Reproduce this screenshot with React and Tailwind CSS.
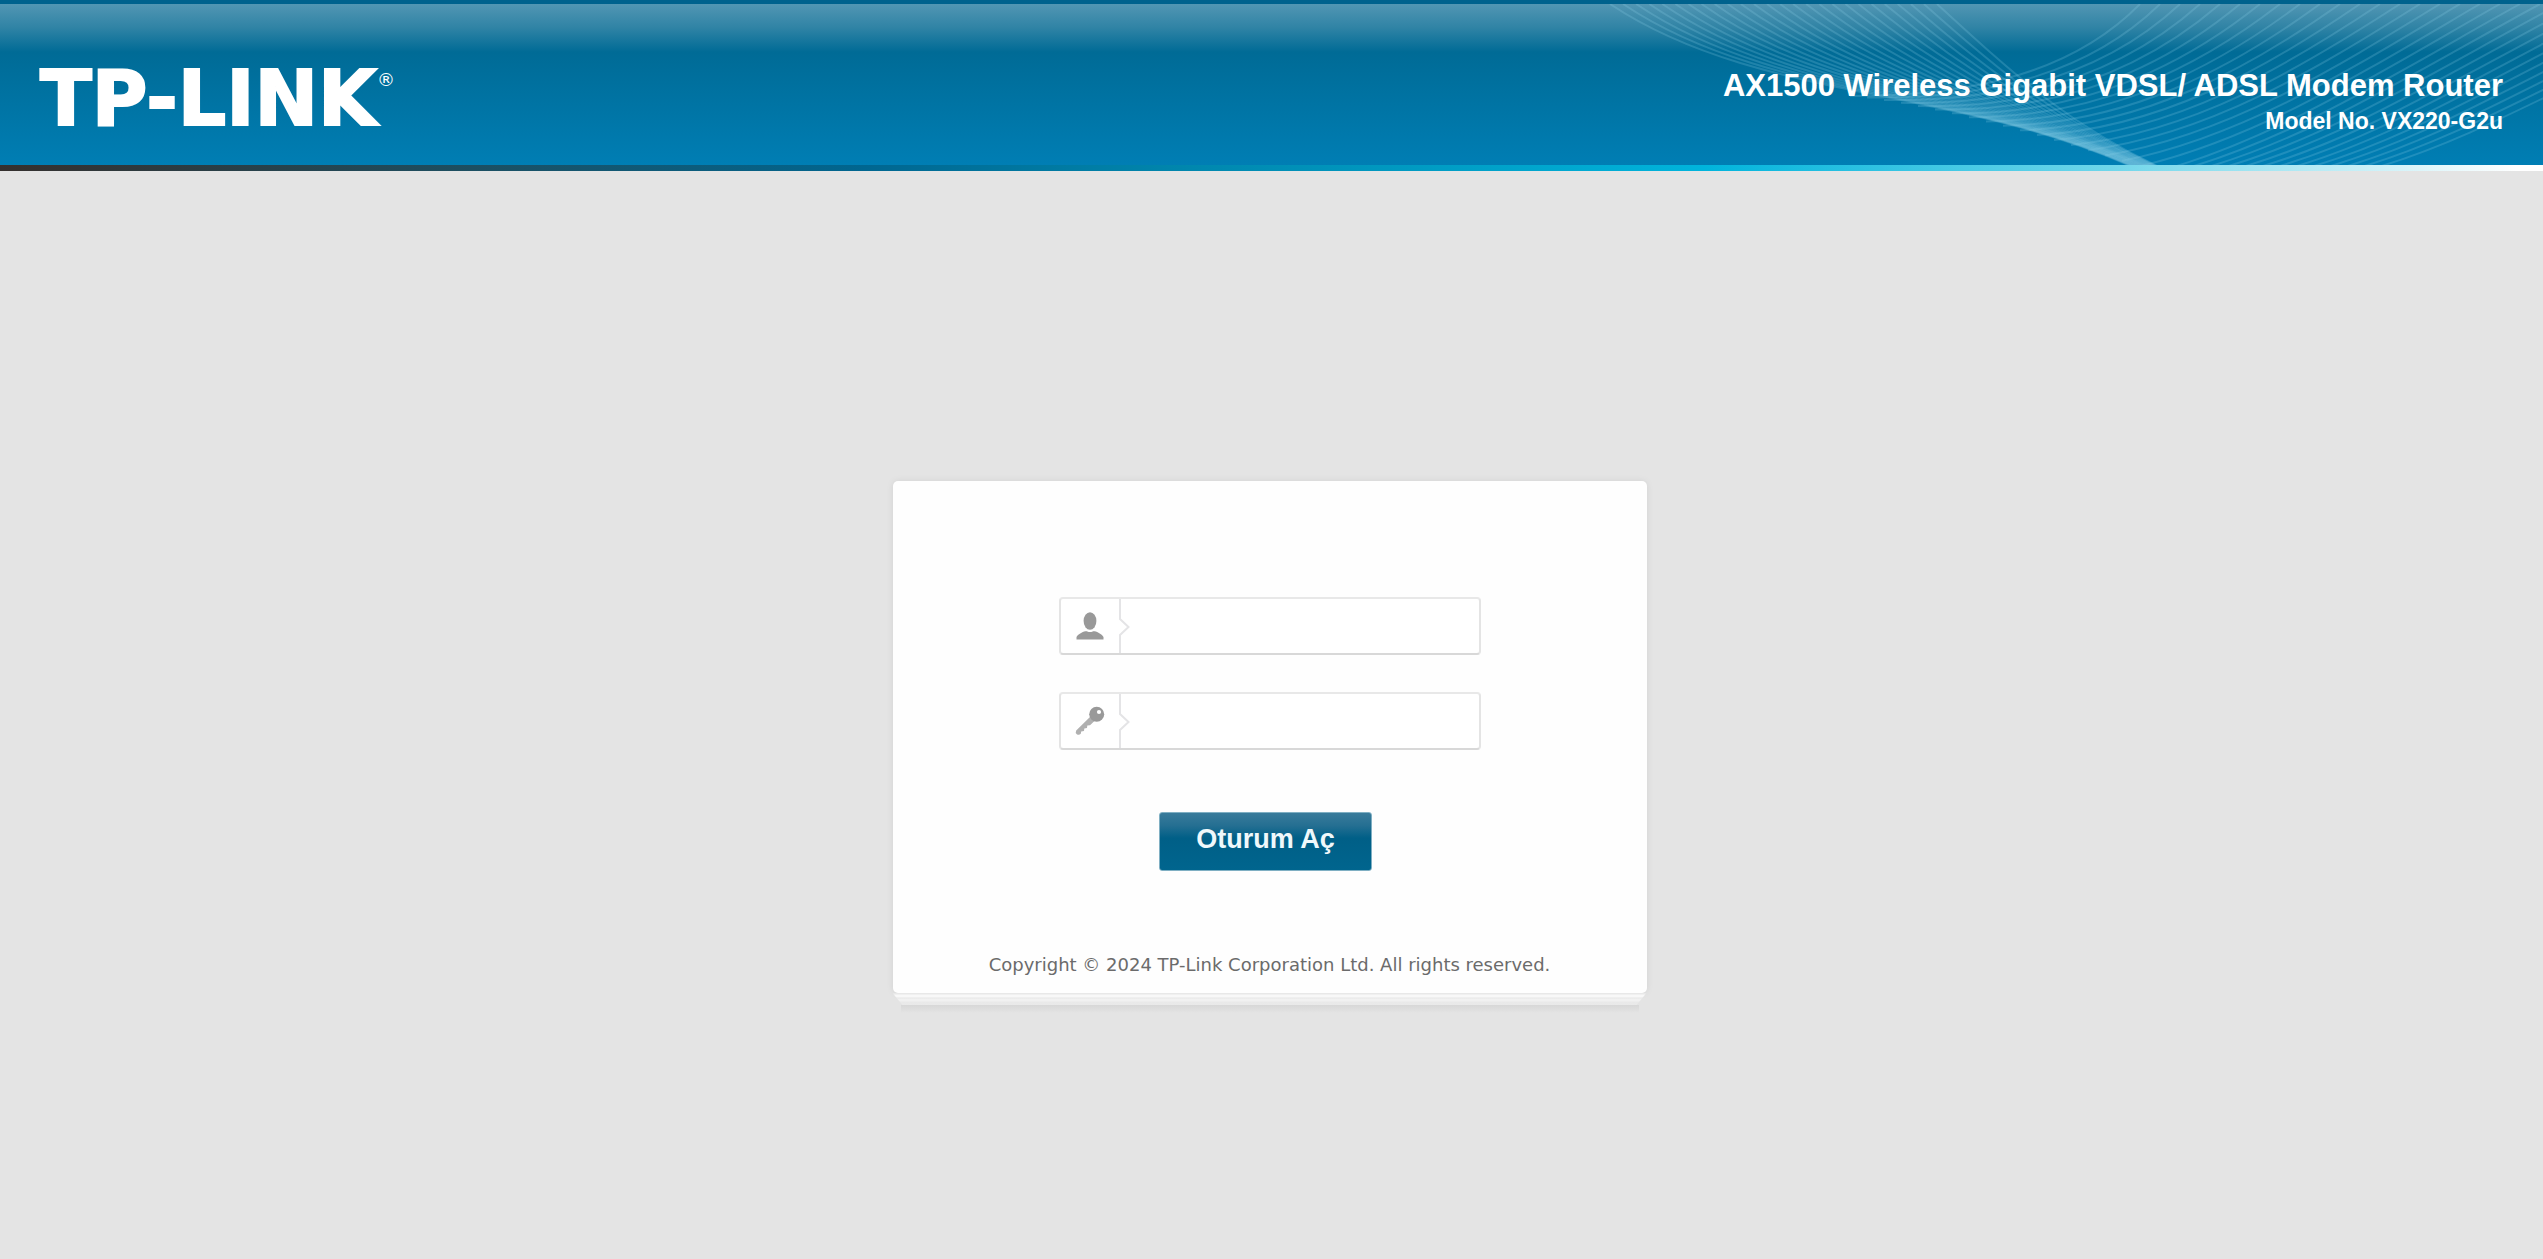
import React, { useState } from 'react';

// linear mix between two values
const mix = (a, b, t) => a + (b - a) * t;

// curves that come down from the left side
const leftCurves = Array.from({ length: 26 }, (_, i) => {
  const t = i / 25;
  return `M${mix(7, 334, t)} 0C${mix(157, 408, t)} ${mix(100, 68, t)} ${mix(357, 470, t)} ${mix(80, 126, t)} ${mix(545, 572, t)} 170`;
});

// curves that come down from the right side
const rightCurves = Array.from({ length: 31 }, (_, i) => {
  const t = i / 30;
  const endX = mix(247, 757, t);
  const endY = t < 0.6 ? 92 + 76 * Math.pow(t / 0.6, 1.35) : 168;
  return `M${mix(537, 1137, t)} 0C${mix(472, 987, t)} 66 ${mix(377, 867, t)} ${mix(92, 140, t) + 16 * Math.sin(Math.PI * t)} ${endX} ${endY}`;
});

const Waves = () => (
  <svg className="absolute right-0 top-0" width="940" height="165" viewBox="0 0 940 165" fill="none" stroke="#8fd0e6" aria-hidden="true">
    <g strokeWidth="2" strokeOpacity="0.22">
      {leftCurves.map((d) => <path key={d} d={d} />)}
      {rightCurves.map((d) => <path key={d} d={d} />)}
    </g>
  </svg>
);

const UserIcon = ({ label }) => (
  <svg width="28" height="28" viewBox="0 0 28 28" fill="#999999" role="img" aria-label={label}>
    <ellipse cx="14" cy="9" rx="6.4" ry="8.8" />
    <path d="M0.5 27.5V25C2 22.5 6 20 9.5 19.3C11 19 12 20 14 20C16 20 17 19 18.5 19.3C22 20 26 22.5 27.5 25V27.5Z" />
  </svg>
);

const KeyIcon = ({ label }) => (
  <svg width="30" height="30" viewBox="0 0 30 30" role="img" aria-label={label}>
    <path d="M16 10L1.2 24.5Q0 27 1.8 28.3Q4 29.6 5.8 27.8L6.2 25.5L9 25L9.3 22.6L12 22L12.3 19.6L15 19.2L20 14.5Z" fill="#b0b0b0" />
    <circle cx="21.7" cy="8.3" r="7.5" fill="#999999" />
    <circle cx="24" cy="6" r="2.1" fill="#ffffff" />
  </svg>
);

const Field = ({ id, type, icon, value, onChange }) => (
  <div className="flex h-[58px] w-full rounded-[4px] border-2 border-t-[#e8e8e8] border-x-[#e4e4e4] border-b-[#d8d8d8] bg-white">
    <label htmlFor={id} className="flex w-[58px] shrink-0 items-center justify-center">
      {icon}
    </label>
    <svg className="shrink-0" width="12" height="54" viewBox="0 0 12 54" fill="none" stroke="#e4e4e6" strokeWidth="2" aria-hidden="true">
      <path d="M1 0V20L9.5 28L1 36V54" />
    </svg>
    <input
      id={id}
      type={type}
      value={value}
      onChange={onChange}
      className="min-w-0 flex-1 px-3 text-2xl text-[#555555] focus:outline-none"
    />
  </div>
);

const Header = () => (
  <header>
    <div className="relative flex h-[165px] items-start justify-between overflow-hidden border-t-4 border-[#00628d] bg-[linear-gradient(to_bottom,#5296b3_0,#2f83a5_24px,#006b96_48px,#007eb4_161px)] px-10 text-white">
      <Waves />
      <a href="#" className="relative flex items-start pt-[62px] font-['DejaVu_Sans',sans-serif] font-bold">
        <span className="text-[76px] leading-[66px] [-webkit-text-stroke:2px_white]">TP-LINK</span>
        <span className="text-lg font-normal">®</span>
      </a>
      <div className="relative pt-[63px] text-right font-['Liberation_Sans',Arial,sans-serif] font-bold">
        <h1 className="text-[31px] leading-[38px]">AX1500 Wireless Gigabit VDSL/ ADSL Modem Router</h1>
        <p className="text-[23px] leading-8">Model No. VX220-G2u</p>
      </div>
    </div>
    <div className="h-1.5 bg-[linear-gradient(to_right,#35302e_0%,#1d4e60_18%,#006690_34%,#0085ac_46%,#00b4dc_67%,#6fd6ea_83%,#ffffff_99%)]" />
  </header>
);

const App = () => {
  const [username, setUsername] = useState('');
  const [password, setPassword] = useState('');

  const handleSubmit = (e) => {
    e.preventDefault();
  };

  return (
    <div className="min-h-screen bg-[#e4e4e4] pb-12">
      <Header />

      <div className="pr-1 pt-[310px]">
        <main className="mx-auto w-full max-w-[754px]">
          <div className="rounded-[5px] bg-[#fefefe] shadow-[0_0_7px_rgba(0,0,0,0.08)]">
            <form onSubmit={handleSubmit} className="mx-auto flex w-full max-w-[422px] flex-col items-center pt-[116px]" autoComplete="off">
              <div className="flex w-full flex-col gap-[37px]">
                <Field id="username" type="text" icon={<UserIcon label="Kullanıcı Adı" />} value={username} onChange={(e) => setUsername(e.target.value)} />
                <Field id="password" type="password" icon={<KeyIcon label="Şifre" />} value={password} onChange={(e) => setPassword(e.target.value)} />
              </div>
              <button
                type="submit"
                className="mr-2 mt-[62px] h-[59px] w-[213px] rounded-[3px] border border-[#7fafc3] bg-[linear-gradient(to_bottom,#397b9b_0%,#256f92_22%,#005f87_44%,#00658e_100%)] pb-1 font-['Liberation_Sans',Arial,sans-serif] text-[27px] font-bold text-[#eff8fb]"
              >
                Oturum Aç
              </button>
            </form>
            <p className="pt-[82px] pb-4 text-center font-[Verdana,'DejaVu_Sans',sans-serif] text-lg leading-6 text-[#6b6b6b]">
              Copyright © 2024 TP-Link Corporation Ltd. All rights reserved.
            </p>
          </div>
          {/* stacked paper edge under the card */}
          <div className="h-3 bg-[linear-gradient(to_bottom,#e8e8e8_0,#e8e8e8_1px,#f8f8f8_2px,#f8f8f8_4px,#e6e6e6_5px,#f1f1f1_6px,#f1f1f1_8px,#e9e9e9_9px,#eaeaea_12px)] [clip-path:polygon(0_0,100%_0,calc(100%-10px)_100%,10px_100%)]" />
          <div className="mx-2 h-2 bg-linear-to-b from-[#d7d7d7] to-[#e4e4e4]" />
        </main>
      </div>
    </div>
  );
};

export default App;
